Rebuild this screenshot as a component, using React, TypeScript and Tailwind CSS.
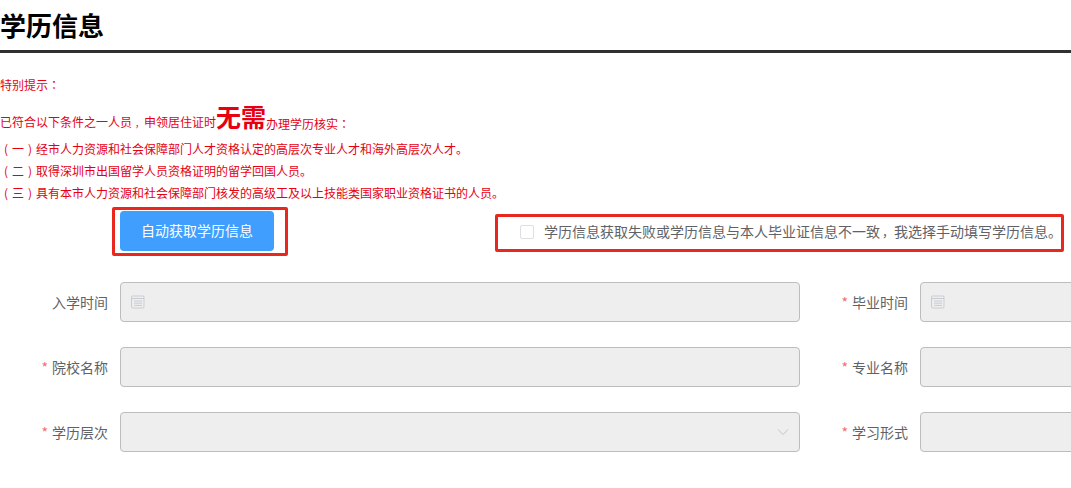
const font = "font-['Microsoft_YaHei','Noto_Sans_CJK_SC','Liberation_Sans',sans-serif]";

function P({ c }: { c: string }) {
  return <span className="font-['Noto_Sans_CJK_TC',sans-serif]">{c}</span>;
}

function CalendarIcon() {
  return (
    <svg width="14" height="14" viewBox="0 0 14 14" fill="none" stroke="#c8ccd2" strokeWidth="1">
      <rect x="0.5" y="1" width="12.5" height="12" rx="1" />
      <path d="M0.5 3.5H13M3 6H11M3 8.2H11M3 10.4H11" />
    </svg>
  );
}

function Label({ text, required }: { text: string; required?: boolean }) {
  return (
    <label className="w-[108px] shrink-0 text-right text-[14px] leading-[40px] text-[#606266]">
      {required && <span className="mr-[4px] text-[#f56c6c]">*</span>}
      {text}
    </label>
  );
}

function Field({ wide, icon, chevron }: { wide?: boolean; icon?: boolean; chevron?: boolean }) {
  return (
    <div
      className={`${wide ? "w-[680px]" : "w-[260px]"} ml-[12px] flex h-[40px] shrink-0 items-center justify-between rounded-[4px] border border-[#bdbdbd] bg-[#eeeeee] px-[10px]`}
    >
      {icon ? <CalendarIcon /> : <span />}
      {chevron && (
        <svg width="12" height="12" viewBox="0 0 12 12" fill="none" stroke="#c0c4cc" strokeWidth="1">
          <path d="M1 3.5L6 8.5L11 3.5" />
        </svg>
      )}
    </div>
  );
}

function Row({ children }: { children: React.ReactNode }) {
  return <div className="mb-[25px] flex h-[40px]">{children}</div>;
}

function Item({ n, text }: { n: string; text: string }) {
  return (
    <p className="flex leading-[22px]">
      <span className="w-[12px] text-center">(</span>
      <span>{n}</span>
      <span className="w-[12px] text-center">)</span>
      <span>{text}</span>
    </p>
  );
}

export default function App() {
  return (
    <div className={`${font} h-[488px] w-[1071px] overflow-hidden bg-white`}>
      <div className="h-[53px] border-b-[3px] border-[#303030]">
        <h1 className="text-[26px] font-bold leading-[50px] text-black">学历信息</h1>
      </div>

      <div className="text-[12px] text-[#e60012]">
        <p className="mt-[24px] leading-[16px]">
          特别提示
          <P c="：" />
        </p>
        <p className="mt-[8px] flex h-[30px] items-end leading-[14px]">
          <span>
            已符合以下条件之一人员
            <span className="inline-block w-[12px] pl-[3px] text-[9px]">，</span>
            申领居住证时
          </span>
          <span className="text-[25px] font-bold leading-[30px] text-[#e60012]">无需</span>
          <span>
            办理学历核实
            <P c="：" />
          </span>
        </p>
        <div className="mt-[7px]">
          <Item n="一" text="经市人力资源和社会保障部门人才资格认定的高层次专业人才和海外高层次人才。" />
          <Item n="二" text="取得深圳市出国留学人员资格证明的留学回国人员。" />
          <Item n="三" text="具有本市人力资源和社会保障部门核发的高级工及以上技能类国家职业资格证书的人员。" />
        </div>
      </div>

      <div className="flex h-[78px] items-start">
        <div className="ml-[112px] mt-[3px] flex h-[49px] w-[176px] items-start rounded-[2px] border-[3px] border-[#e8281e] pl-[5px] pt-[1px]">
          <button className="h-[40px] w-[154px] rounded-[4px] bg-[#409eff] pb-[2px] text-[14px] text-white">自动获取学历信息</button>
        </div>
        <div className="ml-[207px] mt-[10px] flex h-[38px] w-[569px] items-center rounded-[2px] border-[3px] border-[#e8281e] pb-[3px] pl-[22px]">
          <span className="h-[14px] w-[14px] shrink-0 rounded-[2px] border border-[#dcdfe6] bg-white" />
          <span className="ml-[10px] whitespace-nowrap text-[14px] text-[#606266]">
            学历信息获取失败或学历信息与本人毕业证信息不一致
            <span className="inline-block w-[14px] pl-[2px] text-[12px]">，</span>
            我选择手动填写学历信息。
          </span>
        </div>
      </div>

      <Row>
        <Label text="入学时间" />
        <Field wide icon />
        <Label text="毕业时间" required />
        <Field icon />
      </Row>
      <Row>
        <Label text="院校名称" required />
        <Field wide />
        <Label text="专业名称" required />
        <Field />
      </Row>
      <Row>
        <Label text="学历层次" required />
        <Field wide chevron />
        <Label text="学习形式" required />
        <Field />
      </Row>
    </div>
  );
}
